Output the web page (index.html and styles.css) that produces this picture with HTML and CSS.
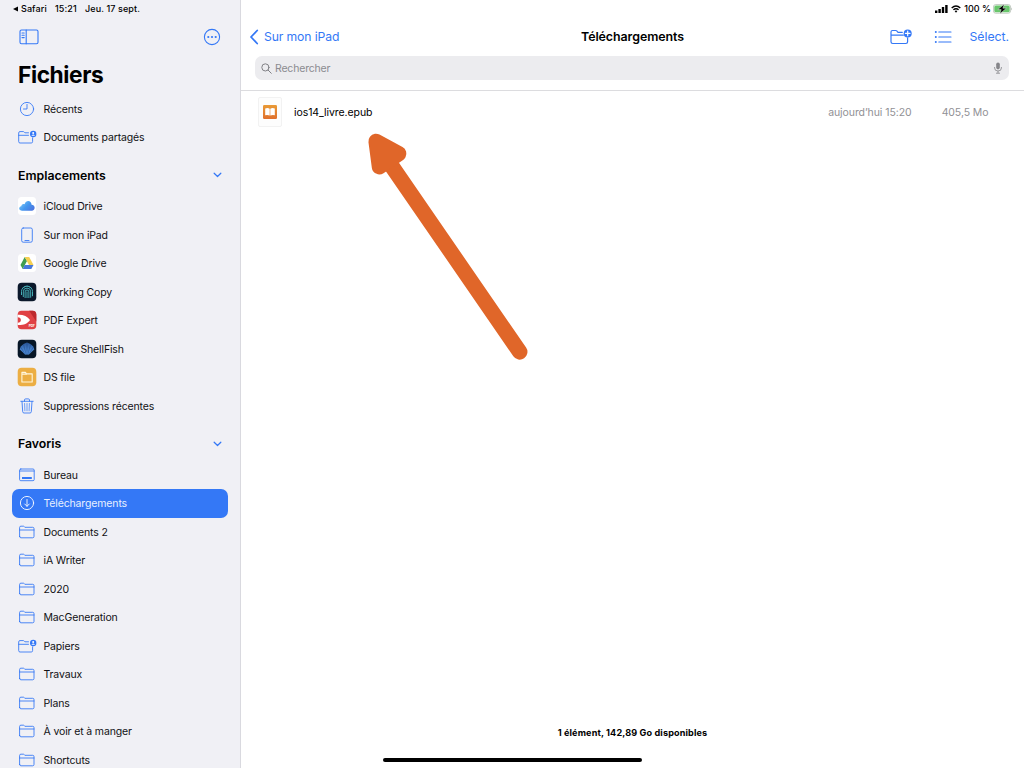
FILE: index.html
```
<!DOCTYPE html>
<html lang="fr">
<head>
<meta charset="utf-8">
<title>Fichiers</title>
<link rel="stylesheet" href="styles.css">
</head>
<body>
<svg class="defs" width="0" height="0">
  <defs>
    <linearGradient id="cloudFill" x1="0" y1="0.2" x2="1" y2="0.8"><stop offset="0" stop-color="#79c9f8"/><stop offset="0.5" stop-color="#4597ee"/><stop offset="1" stop-color="#4b73df"/></linearGradient>
    <linearGradient id="shellFill" x1="0" y1="0" x2="0" y2="1"><stop offset="0" stop-color="#2a5698"/><stop offset="1" stop-color="#599deb"/></linearGradient>
    <linearGradient id="bookFill" x1="0" y1="0" x2="0" y2="1"><stop offset="0" stop-color="#e99a36"/><stop offset="1" stop-color="#e0702d"/></linearGradient>
    <symbol id="folder" viewBox="0 0 20 20"><path d="M2.6 14.4V5.5q0-1.3 1.3-1.3h2.5q.6 0 1 .5l.5.6h7.8q1.3 0 1.3 1.3v7.8q0 1.4-1.3 1.4H3.9q-1.3 0-1.3-1.4zM2.6 8h14.4"/></symbol>
    <symbol id="shared" viewBox="0 0 20 20"><path d="M11.5 5.8H7.9l-.6-.7q-.4-.5-1-.5H3q-1.3 0-1.3 1.3v8.7q0 1.4 1.3 1.4h11.3q1.3 0 1.3-1.4V10.8M1.7 8.3h9.8"/><circle cx="16.2" cy="7" r="3.2" fill="#3478f6" stroke="none"/><circle cx="16.2" cy="6" r="1" fill="#fff" stroke="none"/><path d="M14.4 8.8q1.8-2.5 3.6 0z" fill="#fff" stroke="none"/></symbol>
    <symbol id="chevron" viewBox="0 0 10 6"><path d="M1.3 1.1 5 4.7l3.7-3.6"/></symbol>
  </defs>
</svg>
<div class="app">
  <aside class="sidebar">
    <div class="status-left"><svg class="back-mark" viewBox="0 0 6 6"><path d="M6 0v6L0 3z"/></svg><span class="safari">Safari</span><span class="time">15:21</span><span class="date">Jeu. 17 sept.</span></div>
    <div class="side-tools">
      <svg class="line panel" viewBox="0 0 20 16"><rect x="1" y="1" width="18" height="13.7" rx="1.5"/><path d="M7.2 1v13.7M3 4h2.2M3 6.3h2.2M3 8.6h2.2"/></svg>
      <svg class="line more" viewBox="0 0 18 18"><circle cx="9" cy="9" r="7.6"/><g fill="#3478f6" stroke="none"><circle cx="5.3" cy="9" r="1.1"/><circle cx="9" cy="9" r="1.1"/><circle cx="12.7" cy="9" r="1.1"/></g></svg>
    </div>
    <h1 class="title">Fichiers</h1>
    <nav>
      <div class="row"><svg class="line icon" viewBox="0 0 20 20"><circle cx="10" cy="10" r="6.6"/><path d="M10 5.4V10H6.5"/></svg><span>Récents</span></div>
      <div class="row"><svg class="line icon"><use href="#shared"/></svg><span>Documents partagés</span></div>
      <h2 class="section">Emplacements<svg class="line chev"><use href="#chevron"/></svg></h2>
      <div class="row"><svg class="icon" viewBox="0 0 20 20"><rect x="1" y="1" width="18" height="18" rx="3.5" fill="#fff"/><path d="M5.2 14.7C1.6 14.7 1.2 10.9 4.3 10.3 4.3 8.5 6 7.4 7.6 8.2 9 3.5 14.4 4.3 14.6 8.8 18.8 9 18.5 14.7 14.8 14.7z" fill="url(#cloudFill)"/></svg><span>iCloud Drive</span></div>
      <div class="row"><svg class="line icon" viewBox="0 0 20 20"><rect x="4.7" y="3" width="10.6" height="14.2" rx="1.5"/><path d="M8 15.5h4"/></svg><span>Sur mon iPad</span></div>
      <div class="row"><svg class="icon" viewBox="0 0 20 20"><rect x="1" y="1" width="18" height="18" rx="3.5" fill="#fff"/><path d="M7.7 4 3.5 12l2.2 3.9L10 7.9z" fill="#419d50"/><path d="M7.7 4h4.5l4.3 8H12z" fill="#f5cf52"/><path d="M7.7 12h8.8l-2.2 3.9H5.7z" fill="#4777da"/></svg><span>Google Drive</span></div>
      <div class="row"><svg class="icon" viewBox="0 0 20 20"><rect x=".7" y=".7" width="18.6" height="18.6" rx="4" fill="#0b182b"/><g fill="none" stroke="#46adb5" stroke-width="1"><path d="M4.5 13V9.6a5.5 5.5 0 0 1 11 0v4.6M6.3 15V9.8a3.7 3.7 0 0 1 7.4 0v5.9M8.1 16V9.9a1.9 1.9 0 0 1 3.8 0V16M10 9.5V16"/><path d="M5 6.8q5-5 10 0" stroke-dasharray="2 .6"/></g></svg><span>Working Copy</span></div>
      <div class="row"><svg class="icon" viewBox="0 0 20 20"><rect x=".7" y=".7" width="18.6" height="18.6" rx="3.8" fill="#e04144"/><path d="M12.2.7h3.3q3.8 0 3.8 3.8v7z" fill="#bd292d"/><path d="M.7 4.8C6 4.5 10.5 6.2 13 10 10.5 14 6 15.2.7 15v-2.3q3.2-.2 3.2-2.7T.7 7.2z" fill="#fff"/><text x="11.8" y="17.2" class="pdf-text">PDF</text></svg><span>PDF Expert</span></div>
      <div class="row"><svg class="icon" viewBox="0 0 20 20"><rect x=".7" y=".7" width="18.6" height="18.6" rx="4" fill="#071626"/><path d="M10 3.5 13.5 5l2.8 2.5 1 3-2.6 2.3L12 15.6H8l-2.7-2.8-2.6-2.3 1-3L6.5 5z" fill="url(#shellFill)"/><path d="M10 4v11.3M6.5 5.4 9 15M13.5 5.4 11 15M3.8 8.3 8 15M16.2 8.3 12 15" fill="none" stroke="#173b77" stroke-width=".4"/></svg><span>Secure ShellFish</span></div>
      <div class="row"><svg class="icon" viewBox="0 0 20 20"><rect x=".7" y=".7" width="18.6" height="18.6" rx="4" fill="#ecae43"/><path d="M4.9 15V5.4h3.5l1.2 1.5h5.6V15zM5 7.1h5" fill="none" stroke="#fff6dc" stroke-width="1.1" stroke-linejoin="round"/></svg><span>DS file</span></div>
      <div class="row"><svg class="line icon" viewBox="0 0 20 20"><path d="M3.8 5.3h12.4M7.5 5.2V4q0-1.1 1.1-1.1h2.8q1.1 0 1.1 1.1v1.2M5 5.5l.7 10.2q.1 1.3 1.3 1.3h6q1.2 0 1.3-1.3L15 5.5"/><path d="m7.6 7.5.3 7.3M10 7.5v7.3M12.4 7.5l-.3 7.3" stroke-width=".8"/></svg><span>Suppressions récentes</span></div>
      <h2 class="section">Favoris<svg class="line chev"><use href="#chevron"/></svg></h2>
      <div class="row"><svg class="line icon" viewBox="0 0 20 20"><rect x="2.6" y="4" width="14.6" height="11.7" rx="1.2"/><path d="M2.6 6h14.6"/><rect x="5" y="12" width="9.8" height="2" fill="#3478f6" stroke="none"/></svg><span>Bureau</span></div>
      <div class="row selected"><svg class="line icon" viewBox="0 0 20 20"><circle cx="10" cy="10" r="6.6"/><path d="M10 6.5v6.7M7.7 11l2.3 2.3 2.3-2.3"/></svg><span>Téléchargements</span></div>
      <div class="row"><svg class="line icon"><use href="#folder"/></svg><span>Documents 2</span></div>
      <div class="row"><svg class="line icon"><use href="#folder"/></svg><span>iA Writer</span></div>
      <div class="row"><svg class="line icon"><use href="#folder"/></svg><span>2020</span></div>
      <div class="row"><svg class="line icon"><use href="#folder"/></svg><span>MacGeneration</span></div>
      <div class="row"><svg class="line icon"><use href="#shared"/></svg><span>Papiers</span></div>
      <div class="row"><svg class="line icon"><use href="#folder"/></svg><span>Travaux</span></div>
      <div class="row"><svg class="line icon"><use href="#folder"/></svg><span>Plans</span></div>
      <div class="row"><svg class="line icon"><use href="#folder"/></svg><span>À voir et à manger</span></div>
      <div class="row"><svg class="line icon"><use href="#folder"/></svg><span>Shortcuts</span></div>
    </nav>
  </aside>
  <main class="main">
    <header class="header">
      <div class="status-right">
        <svg class="signal" viewBox="0 0 13 8"><path d="M0 5.5h2.4V8H0zM3.4 4h2.4v4H3.4zM6.8 2h2.4v6H6.8zM10.2 0h2.4v8h-2.4z"/></svg>
        <svg class="wifi" viewBox="0 0 10 8"><path d="M.7 3Q5-.9 9.3 3M2.4 4.8q2.6-2.3 5.2 0" fill="none" stroke="#000" stroke-width="1.4"/><path d="M3.6 6.1q1.4-1 2.8 0L5 7.7z"/></svg>
        <span>100 %</span>
        <svg class="battery" viewBox="0 0 20 10"><rect x=".4" y=".6" width="17.2" height="8.6" rx="2.3" fill="#fff" stroke="#a8b5a8" stroke-width=".7"/><rect x="1.3" y="1.5" width="15.4" height="6.8" rx="1.5" fill="#68c66b"/><path d="M18.4 3.5q1.5 1.4 0 2.8z" fill="#9ba89b"/><path d="M11.2.2 4.8 5.6h3.4L6.9 9.8l6.5-5.6H9.9z" stroke="#fff" stroke-width=".4"/></svg>
      </div>
      <div class="navbar">
        <div class="back"><svg class="line back-arrow" viewBox="0 0 10 16"><path d="M8.2 1.5 2 8l6.2 6.5"/></svg><span>Sur mon iPad</span></div>
        <div class="nav-title">Téléchargements</div>
        <div class="actions">
          <svg class="line new-folder" viewBox="0 0 24 18"><path d="M13.3 4.3H9L8 3.1q-.5-.6-1.2-.6H3.5Q2 2.5 2 4v9.8q0 1.7 1.7 1.7h13.2q1.7 0 1.7-1.7V9.8M2 7.1h12.4"/><circle cx="18.7" cy="5.4" r="4" fill="#3478f6" stroke="none"/><path d="M18.7 3.1v4.6M16.4 5.4H21" stroke="#fff"/></svg>
          <svg class="line list" viewBox="0 0 18 14"><path d="M4.8 2H17M4.8 7H17M4.8 12H17"/><g fill="#3478f6" stroke="none"><circle cx="1.8" cy="2" r="1"/><circle cx="1.8" cy="7" r="1"/><circle cx="1.8" cy="12" r="1"/></g></svg>
          <span class="select">Sélect.</span>
        </div>
      </div>
      <div class="search"><svg class="glass" viewBox="0 0 11 11"><circle cx="4.4" cy="4.4" r="3.6"/><path d="m7.1 7.1 3.2 3.2"/></svg><span>Rechercher</span><svg class="mic" viewBox="0 0 8 12"><rect x="2.2" y=".4" width="3.6" height="7" rx="1.8" fill="#858589"/><path d="M.6 5v1q0 3 3.4 3t3.4-3V5M4 9v2.2M2 11.2h4" fill="none" stroke="#858589" stroke-width=".8"/></svg></div>
    </header>
    <div class="file">
      <div class="thumb"><svg viewBox="0 0 14 14"><rect width="14" height="14" rx="1.2" fill="url(#bookFill)"/><path d="M2.2 3.5q2.7-1 4.5.3v6.8q-1.8-1-4.5-.4zM7.3 3.8q1.8-1.3 4.5-.3v6.7q-2.7-.6-4.5.4z" fill="#fff"/></svg></div>
      <span class="name">ios14_livre.epub</span><span class="when">aujourd’hui 15:20</span><span class="size">405,5 Mo</span>
    </div>
    <footer class="footer"><div class="summary">1 élément, 142,89 Go disponibles</div><div class="home-bar"></div></footer>
  </main>
  <svg class="arrow" viewBox="0 0 170 235"><path d="M159.7 221.9 31 35"/><path class="head" d="M15.9 11.2 38.9 23.7 19.3 37z"/></svg>
</div>
</body>
</html>
```
FILE: styles.css
```
* { box-sizing: border-box; }
body { margin: 0; font-family: Inter, "Liberation Sans", sans-serif; color: #111114; }
svg { display: block; flex: none; }
.defs { position: absolute; }
.app { position: relative; display: flex; width: 1024px; height: 768px; overflow: hidden; background: #fff; }
.line { fill: none; stroke: #3478f6; stroke-width: 1; stroke-linecap: round; stroke-linejoin: round; }

.sidebar { width: 241px; height: 768px; overflow: hidden; background: #f0f0f5; border-right: 1px solid #d9d9df; }
.status-left { display: flex; align-items: center; height: 18px; padding: 0 0 1px 12.5px; font-size: 9px; font-weight: 500; letter-spacing: .1px; color: #000; white-space: nowrap; }
.back-mark { width: 5.5px; height: 6px; margin-right: 3px; }
.safari { width: 34px; }
.time { width: 30px; }
.side-tools { display: flex; align-items: center; justify-content: space-between; height: 38px; padding: 0 19px 0 19px; }
.side-tools .line { stroke-width: 1.1; }
.panel { width: 20px; height: 16px; }
.more { width: 18px; height: 18px; }
.title { height: 38.5px; margin: 0; padding-left: 18px; font-size: 22.7px; line-height: 37px; font-weight: 700; letter-spacing: -.4px; color: #000; }
.row { display: flex; align-items: center; gap: 6.5px; height: 28.5px; margin: 0 12px; padding-left: 5px; border-radius: 7px; font-size: 10.5px; letter-spacing: -.14px; white-space: nowrap; }
.row span { padding-top: 1px; }
.icon { width: 20px; height: 20px; }
.icon.line { stroke-opacity: .88; }
.selected { background: #3478f6; color: #e8f0ff; }
.selected .icon { stroke: #fff; }
.section { display: flex; align-items: center; justify-content: space-between; height: 40.5px; margin: 0; padding: 7.4px 18px 0; font-size: 12.3px; font-weight: 600; color: #000; }
.chev { width: 9px; height: 6px; stroke-width: 1.4; }
.pdf-text { font-size: 3.2px; font-weight: 700; fill: #fff; }

.main { display: flex; flex: 1; flex-direction: column; height: 768px; }
.header { height: 91px; border-bottom: 1px solid #dcdcdf; }
.status-right { display: flex; align-items: center; justify-content: flex-end; height: 18px; padding: 0 11px 1px 0; font-size: 9px; font-weight: 500; color: #000; }
.signal { width: 13px; height: 8px; margin-right: 3px; }
.wifi { width: 10px; height: 8px; margin-right: 3px; }
.battery { width: 20px; height: 10px; margin-left: 2px; }
.navbar { display: grid; grid-template-columns: 1fr auto 1fr; align-items: center; height: 38px; padding: 0 8px; font-size: 12.2px; letter-spacing: -.12px; color: #3478f6; }
.navbar span, .nav-title { padding-bottom: 1px; }
.back { display: flex; align-items: center; gap: 5px; }
.back-arrow { width: 10px; height: 16px; stroke-width: 1.8; }
.nav-title { font-weight: 600; color: #000; letter-spacing: -.06px; font-size: 12.4px; }
.actions { display: flex; align-items: center; justify-content: flex-end; margin-right: 7px; }
.new-folder { width: 24px; height: 18px; margin-right: 21.5px; stroke-width: 1.2; }
.list { width: 18px; height: 14px; margin-right: 17px; stroke-width: 1.1; }
.select { font-size: 12.3px; letter-spacing: -.04px; }
.search { display: flex; align-items: center; height: 24px; margin: 0 15px 0 14px; padding: 0 7px 0 6px; border-radius: 7px; background: #ececef; color: #8b8b90; font-size: 10.5px; letter-spacing: -.18px; }
.glass { width: 11px; height: 11px; margin-right: 3px; fill: none; stroke: #808085; stroke-width: 1; stroke-linecap: round; }
.mic { width: 8px; height: 12px; margin-left: auto; }
.file { display: flex; align-items: center; height: 42px; padding: 0 35.5px 0 17px; font-size: 10.5px; letter-spacing: -.08px; color: #000; white-space: nowrap; }
.thumb { display: flex; align-items: center; justify-content: center; width: 24px; height: 30px; margin-right: 12px; border: 1px solid #f2f2f2; border-radius: 2px; background: #fdfdfd; }
.thumb svg { width: 14px; height: 14px; }
.when { margin-left: auto; color: #919195; }
.size { width: 77px; text-align: right; color: #919195; }
.footer { display: flex; flex-direction: column; align-items: center; height: 42px; margin-top: auto; }
.summary { height: 32px; font-size: 9.1px; line-height: 13px; font-weight: 700; letter-spacing: .13px; color: #000; }
.home-bar { width: 259px; height: 4px; border-radius: 2px; background: #000; margin-right: 241px; }
.arrow { position: absolute; left: 360px; top: 130px; width: 170px; height: 235px; fill: none; stroke: #e06629; stroke-width: 15.5; stroke-linecap: round; stroke-linejoin: round; pointer-events: none; }
.head { fill: #e06629; stroke-width: 15; }
```
